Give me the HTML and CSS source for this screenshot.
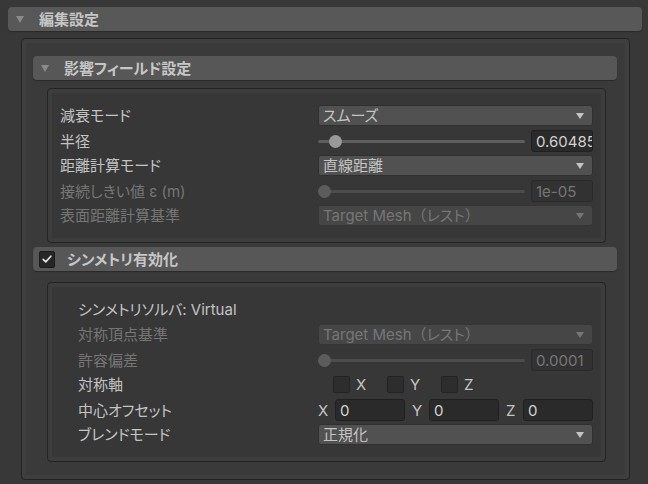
FILE: index.html
```html
<!DOCTYPE html>
<html lang="ja">
<head>
    <meta charset="UTF-8">
    <meta name="viewport" content="width=device-width, initial-scale=1.0">
    <title>編集設定</title>
    <link rel="stylesheet" href="styles.css">
</head>
<body>
    <!-- 最上位のフォールドアウト -->
    <div class="foldout foldout-top">
        <span class="fold-arrow"></span>
        <span class="foldout-title">編集設定</span>
    </div>

    <div class="group">
        <!-- 影響フィールド設定 -->
        <div class="foldout">
            <span class="fold-arrow"></span>
            <span class="foldout-title">影響フィールド設定</span>
        </div>
        <div class="box">
            <div class="row">
                <span class="label">減衰モード</span>
                <div class="dropdown"><span>スムーズ</span><span class="caret"></span></div>
            </div>
            <div class="row">
                <span class="label">半径</span>
                <div class="slider">
                    <div class="track"><span class="knob" style="left: 11px"></span></div>
                    <div class="number">0.60485</div>
                </div>
            </div>
            <div class="row">
                <span class="label">距離計算モード</span>
                <div class="dropdown"><span>直線距離</span><span class="caret"></span></div>
            </div>
            <div class="row disabled">
                <span class="label">接続しきい値 ε (m)</span>
                <div class="slider">
                    <div class="track"><span class="knob" style="left: 0px"></span></div>
                    <div class="number">1e-05</div>
                </div>
            </div>
            <div class="row disabled">
                <span class="label">表面距離計算基準</span>
                <div class="dropdown"><span>Target Mesh<span class="wide">（</span>レスト<span class="wide">）</span></span><span class="caret"></span></div>
            </div>
        </div>

        <!-- シンメトリ -->
        <div class="foldout foldout-toggle">
            <span class="check-box on">
                <svg width="16" height="16" viewBox="0 0 16 16"><path d="M3.6 8.4 L6.6 11.3 L12.4 4.8" fill="none" stroke="#e8e8e8" stroke-width="1.8" stroke-linecap="round" stroke-linejoin="round"/></svg>
            </span>
            <span class="foldout-title">シンメトリ有効化</span>
        </div>
        <div class="box">
            <div class="row">
                <span class="label indent full">シンメトリソルバ: Virtual</span>
            </div>
            <div class="row disabled">
                <span class="label indent">対称頂点基準</span>
                <div class="dropdown"><span>Target Mesh<span class="wide">（</span>レスト<span class="wide">）</span></span><span class="caret"></span></div>
            </div>
            <div class="row disabled">
                <span class="label indent">許容偏差</span>
                <div class="slider">
                    <div class="track"><span class="knob" style="left: 0px"></span></div>
                    <div class="number">0.0001</div>
                </div>
            </div>
            <div class="row">
                <span class="label indent">対称軸</span>
                <div class="axis-toggles">
                    <span class="axis"><span class="check-box"></span>X</span>
                    <span class="axis"><span class="check-box"></span>Y</span>
                    <span class="axis"><span class="check-box"></span>Z</span>
                </div>
            </div>
            <div class="row">
                <span class="label indent">中心オフセット</span>
                <div class="vector">
                    <div class="vec-item"><span class="vec-label">X</span><div class="number">0</div></div>
                    <div class="vec-item"><span class="vec-label">Y</span><div class="number">0</div></div>
                    <div class="vec-item"><span class="vec-label">Z</span><div class="number">0</div></div>
                </div>
            </div>
            <div class="row">
                <span class="label indent">ブレンドモード</span>
                <div class="dropdown"><span>正規化</span><span class="caret"></span></div>
            </div>
        </div>
    </div>
</body>
</html>
```

FILE: styles.css
```css
/* Stile generale: tema scuro stile editor */
body {
    margin: 0;
    background-color: #383838;
    color: #c4c4c4;
    font-family: Inter, "Noto Sans CJK JP", sans-serif;
    font-size: 15px;
    font-feature-settings: "palt";
    line-height: 21px;
}
.wide {
    font-feature-settings: normal; /* parentesi a larghezza piena */
}

/* Intestazioni richiudibili */
.foldout {
    display: flex;
    align-items: center;
    height: 24px;
    background-color: #575757;
    border-radius: 4px;
    box-shadow: 0 1px 1px #2a2a2a;
}
.foldout-top {
    margin: 7px 6px 0 8px;
    background-color: #585858;
}
.fold-arrow {
    width: 0;
    height: 0;
    border-left: 4.5px solid transparent;
    border-right: 4.5px solid transparent;
    border-top: 7px solid #8a8a8a;
    margin-left: 8px;
    margin-right: 15px;
}
.foldout-title {
    font-weight: bold;
    color: #c6c6c6;
}
.foldout-toggle {
    margin-top: 4px;
}
.foldout-toggle .check-box {
    margin-left: 6px;
    margin-right: 12px;
}

/* Contenitori */
.group {
    margin: 7px 18px 0 21px;
    padding: 17px 12px 17px 11px;
    border: 1px solid #232323;
    border-radius: 4px;
    background-color: #3a3a3a;
    box-shadow: inset 0 0 0 4px #3f3f3f;
}
.box {
    display: grid;
    row-gap: 4px;
    margin: 8px 11px 0 14px;
    padding: 16px 12px;
    border: 1px solid #242424;
    border-radius: 4px;
    background-color: #373737;
    box-shadow: inset 0 0 0 4px #3d3d3d;
}
.foldout-toggle + .box {
    margin-top: 11px;
}

/* Righe proprietà */
.row {
    display: grid;
    grid-template-columns: 1fr 275px;
    height: 21px;
    align-items: center;
}
.label {
    white-space: nowrap;
}
.label.indent {
    padding-left: 18px;
}
.label.full {
    grid-column: 1 / 3;
}
.disabled .label,
.disabled .dropdown,
.disabled .number {
    color: #767676;
}

/* Menu a tendina */
.dropdown {
    display: flex;
    align-items: center;
    justify-content: space-between;
    height: 21px;
    padding: 0 8px 0 4px;
    background-color: #515151;
    border: 1px solid #303030;
    border-radius: 3px;
    box-sizing: border-box;
    white-space: nowrap;
}
.disabled .dropdown {
    background-color: #464646;
    border-color: #353535;
}
.caret {
    width: 0;
    height: 0;
    border-left: 4.5px solid transparent;
    border-right: 4.5px solid transparent;
    border-top: 6px solid #c4c4c4;
}
.disabled .caret {
    border-top-color: #767676;
}

/* Slider con campo numerico */
.slider {
    display: flex;
    align-items: center;
    gap: 6px;
}
.track {
    position: relative;
    flex: 1;
    height: 3px;
    background-color: #5e5e5e;
    border-radius: 2px;
}
.knob {
    position: absolute;
    top: -5px;
    width: 13px;
    height: 13px;
    border-radius: 50%;
    background-color: #999;
}
.disabled .track {
    background-color: #4c4c4c;
}
.disabled .knob {
    background-color: #5c5c5c;
}
.number {
    height: 22px;
    line-height: 21px;
    padding-left: 4px;
    background-color: #2a2a2a;
    border: 1px solid #202020;
    border-radius: 3px;
    box-sizing: border-box;
    color: #d2d2d2;
    overflow: hidden;
    white-space: nowrap;
}
.slider .number {
    width: 62px;
}
.disabled .number {
    background-color: #323232;
    border-color: #2a2a2a;
}

/* Checkbox */
.check-box {
    display: inline-flex;
    width: 16px;
    height: 17px;
    background-color: #262626;
    border: 1px solid #1c1c1c;
    border-radius: 2px;
    box-sizing: border-box;
    align-items: center;
    justify-content: center;
}
.axis-toggles {
    display: flex;
    padding-left: 15px;
}
.axis {
    display: flex;
    align-items: center;
    gap: 6px;
    width: 54px;
}
.axis .check-box {
    width: 17px;
    background-color: #2d2d2d;
    border-color: #232323;
}

/* Vettore XYZ */
.vector {
    display: flex;
    gap: 7px;
}
.vec-item {
    display: flex;
    align-items: center;
    flex: 1;
}
.vec-label {
    width: 17px;
    flex-shrink: 0;
}
.vec-item .number {
    flex: 1;
}
```
